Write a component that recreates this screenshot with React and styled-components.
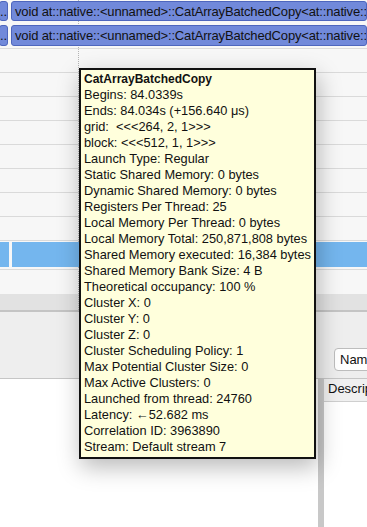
import React from "react";
import styled, { createGlobalStyle } from "styled-components";

const GlobalStyle = createGlobalStyle`
  html, body {
    margin: 0;
    padding: 0;
    background: #ffffff;
  }
  body {
    font-family: "Liberation Sans", Arial, sans-serif;
    font-size: 13px;
    color: #111;
  }
`;

const kernelName = "void at::native::<unnamed>::CatArrayBatchedCopy<at::native::<unnamed>::OpaqueType<4u>, unsigned int, 4, 128, 1>";

const tooltipLines = [
  "Begins: 84.0339s",
  "Ends: 84.034s (+156.640 μs)",
  "grid:  <<<264, 2, 1>>>",
  "block: <<<512, 1, 1>>>",
  "Launch Type: Regular",
  "Static Shared Memory: 0 bytes",
  "Dynamic Shared Memory: 0 bytes",
  "Registers Per Thread: 25",
  "Local Memory Per Thread: 0 bytes",
  "Local Memory Total: 250,871,808 bytes",
  "Shared Memory executed: 16,384 bytes",
  "Shared Memory Bank Size: 4 B",
  "Theoretical occupancy: 100 %",
  "Cluster X: 0",
  "Cluster Y: 0",
  "Cluster Z: 0",
  "Cluster Scheduling Policy: 1",
  "Max Potential Cluster Size: 0",
  "Max Active Clusters: 0",
  "Launched from thread: 24760",
  "Latency: ←52.682 ms",
  "Correlation ID: 3963890",
  "Stream: Default stream 7",
];

export default function App() {
  return (
    <Window>
      <GlobalStyle />
      <Timeline>
        <CursorLine />
        <BarRow>
          <Bar $w="9px">..</Bar>
          <Bar>{kernelName}</Bar>
        </BarRow>
        <BarRow $border>
          <Bar $w="9px">..</Bar>
          <Bar>{kernelName}</Bar>
        </BarRow>
        {Array.from({ length: 8 }).map((_, i) => (
          <EmptyRow key={i} />
        ))}
        <SelectedRow>
          <SelectedBar $w="9px" />
          <SelectedBar />
        </SelectedRow>
        <Filler />
        <ScrollTrack />
      </Timeline>
      <BottomPanel>
        <Toolbar>
          <div />
          <SelectButton>Name</SelectButton>
        </Toolbar>
        <Content>
          <LeftPane />
          <Splitter />
          <Table>
            <TableHeader>Description</TableHeader>
          </Table>
        </Content>
      </BottomPanel>
      <Tooltip>
        <TipTitle>CatArrayBatchedCopy</TipTitle>
        {tooltipLines.map((line) => (
          <TipLine key={line}>{line}</TipLine>
        ))}
      </Tooltip>
    </Window>
  );
}

const Window = styled.div`
  position: relative;
  width: 367px;
  height: 527px;
  overflow: hidden;
  display: flex;
  flex-direction: column;
  background: #fff;
`;

const Timeline = styled.div`
  position: relative;
  display: flex;
  flex-direction: column;
  height: 312px;
  flex-shrink: 0;
  background: #f7f7f7;
`;

const CursorLine = styled.div`
  position: absolute;
  left: 78px;
  top: 0;
  bottom: 0;
  border-left: 1px dotted #b4b4b4;
  z-index: 0;
`;

const BarRow = styled.div`
  position: relative;
  z-index: 1;
  display: flex;
  gap: 3px;
  box-sizing: border-box;
  padding-top: 1px;
  padding-bottom: ${(p) => (p.$border ? "2px" : "3px")};
  height: ${(p) => (p.$border ? "25px" : "24px")};
  border-bottom: ${(p) => (p.$border ? "1px solid #dcdcdc" : "none")};
`;

const Bar = styled.div`
  flex: ${(p) => (p.$w ? `0 0 ${p.$w}` : "1 1 0")};
  min-width: 0;
  box-sizing: border-box;
  background: #7189da;
  border: 1px solid #4e66bd;
  border-radius: 3px;
  margin-left: ${(p) => (p.$w ? "-1px" : "0")};
  padding: 0 ${(p) => (p.$w ? "0" : "3px")};
  font-size: 13px;
  letter-spacing: -0.15px;
  line-height: 19px;
  color: #111;
  white-space: nowrap;
  overflow: hidden;
  text-align: ${(p) => (p.$w ? "right" : "left")};
`;

const EmptyRow = styled.div`
  height: 24px;
  box-sizing: border-box;
  border-bottom: 1px solid #dadada;
  flex-shrink: 0;
`;

const SelectedRow = styled.div`
  position: relative;
  z-index: 1;
  display: flex;
  gap: 3px;
  height: 29px;
  box-sizing: border-box;
  padding: 1px 0 2px;
  border-bottom: 1px solid #dadada;
  flex-shrink: 0;
`;

const SelectedBar = styled.div`
  flex: ${(p) => (p.$w ? `0 0 ${p.$w}` : "1 1 0")};
  background: #74b6ee;
`;

const Filler = styled.div`
  flex: 1;
`;

const ScrollTrack = styled.div`
  height: 18px;
  box-sizing: border-box;
  background: #e2e2e2;
  border-bottom: 2px solid #c4c4c4;
  flex-shrink: 0;
`;

const BottomPanel = styled.div`
  flex: 1;
  display: flex;
  flex-direction: column;
  min-height: 0;
`;

const Toolbar = styled.div`
  height: 67px;
  flex-shrink: 0;
  box-sizing: border-box;
  display: grid;
  grid-template-columns: 334px 120px;
  align-items: end;
  padding-bottom: 7px;
  background: #eeeeee;
  border-bottom: 1px solid #c6c6c6;
  overflow: hidden;
`;

const SelectButton = styled.div`
  height: 23px;
  box-sizing: border-box;
  border: 1px solid #bdbdbd;
  border-radius: 4px;
  background: #fff;
  padding: 0 5px;
  font-size: 13px;
  line-height: 21px;
  color: #111;
`;

const Content = styled.div`
  flex: 1;
  display: flex;
  min-height: 0;
`;

const LeftPane = styled.div`
  width: 318px;
  flex-shrink: 0;
  background: #fff;
`;

const Splitter = styled.div`
  width: 6px;
  flex-shrink: 0;
  background: #c8c8c8;
`;

const Table = styled.div`
  flex: 1;
  display: flex;
  flex-direction: column;
  background: #fff;
  overflow: hidden;
`;

const TableHeader = styled.div`
  height: 23px;
  box-sizing: border-box;
  background: #f0f0f0;
  border-bottom: 1px solid #cfcfcf;
  padding-left: 4px;
  font-size: 13px;
  line-height: 20px;
  white-space: nowrap;
  color: #111;
`;

const Tooltip = styled.div`
  position: absolute;
  left: 79px;
  top: 68px;
  width: 237px;
  box-sizing: border-box;
  background: #ffffdc;
  border: 2px solid #111;
  padding: 1px 3px 2px 3px;
  box-shadow: 2px 8px 22px rgba(0, 0, 0, 0.28);
  z-index: 10;
`;

const TipTitle = styled.div`
  font-weight: bold;
  font-size: 12px;
  line-height: 16px;
  white-space: nowrap;
`;

const TipLine = styled.div`
  font-size: 12.8px;
  line-height: 16px;
  white-space: pre;
`;
